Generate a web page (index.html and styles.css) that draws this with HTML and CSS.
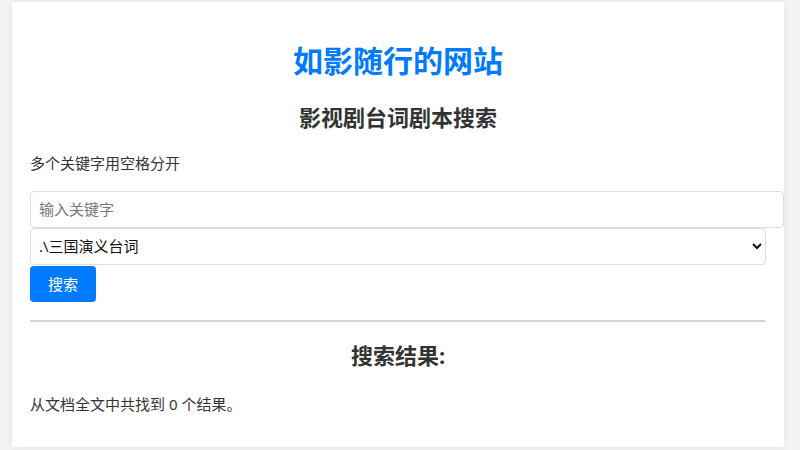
FILE: index.html
```html
<!DOCTYPE html>
<html lang="zh-CN">
<head>
  <meta charset="UTF-8" />
  <meta name="viewport" content="width=device-width, initial-scale=1" />
  <title>如影随行的网站 - 影视剧台词剧本搜索</title>
  <link rel="stylesheet" href="styles.css">
</head>
<body>

  <div class="container">
    <h1>如影随行的网站</h1>
    <h2>影视剧台词剧本搜索</h2>
    <p class="hint">多个关键字用空格分开</p>

    <form class="search-form">
      <input type="text" name="keywords" placeholder="输入关键字">
      <select name="folder">
        <option>.\三国演义台词</option>
        <option>.\红楼梦台词</option>
        <option>.\西游记台词</option>
      </select>
      <button type="submit">搜索</button>
    </form>

    <hr>

    <h2>搜索结果:</h2>
    <p class="result-count">从文档全文中共找到 0 个结果。</p>
  </div>

</body>
</html>
```

FILE: styles.css
```css
body {
  font-family: "Noto Sans", "Noto Sans CJK SC", sans-serif;
  font-size: 15px;
  line-height: 1.4;
  background: #f4f4f4;
  color: #333;
  margin: 0;
  padding: 2px 16px 4px 12px;
}

.container {
  background: white;
  padding: 18px;
  box-shadow: 0 0 8px rgba(0,0,0,0.08);
}

h1 {
  color: #007bff;
  text-align: center;
  font-size: 30px;
  margin: 20px 0;
}

h2 {
  text-align: center;
  font-size: 22px;
  margin: 18px 0;
}

p {
  margin: 15px 0;
}

.hint {
  margin: 20px 0 17px;
}

.search-form input {
  display: block;
  width: 100%;
  padding: 8px;
  border: 1px solid #ddd;
  border-radius: 4px;
  font: inherit;
  line-height: 19px;
  color: #333;
}

.search-form input::placeholder {
  color: #777;
}

.search-form select {
  display: block;
  width: 100%;
  height: 37px;
  box-sizing: border-box;
  padding: 0 4px;
  border: 1px solid #ddd;
  border-radius: 4px;
  background: white;
  font: inherit;
  color: #111;
}

.search-form button {
  margin-top: 1px;
  padding: 7px 18px;
  background-color: #007bff;
  color: white;
  border: none;
  border-radius: 4px;
  font: inherit;
  line-height: 22px;
}

hr {
  border: none;
  border-top: 2px solid #d3d3d3;
  margin: 18px 0;
}

.result-count {
  margin: 23px 0 14px;
}
```
